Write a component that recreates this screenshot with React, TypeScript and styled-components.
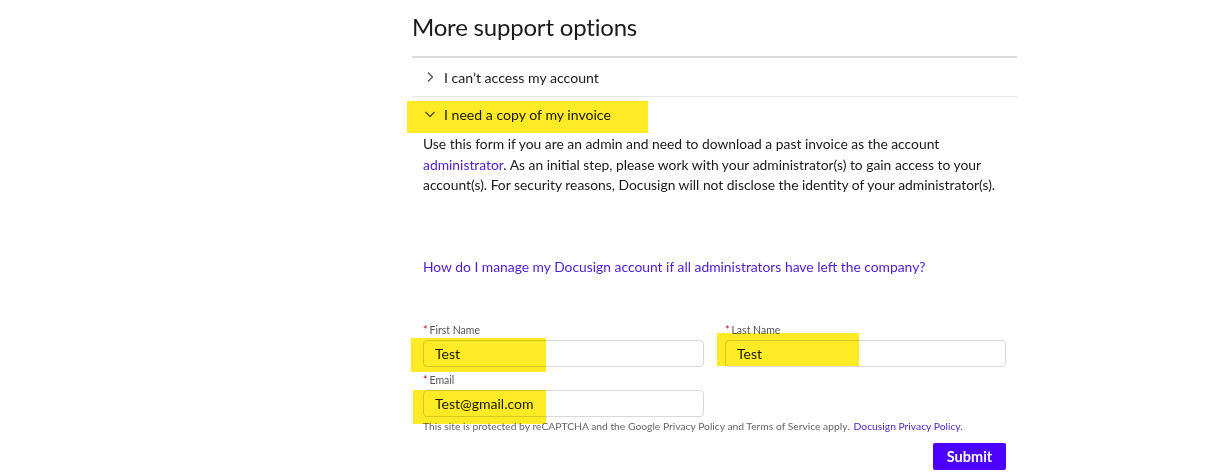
import React from "react";
import styled, { createGlobalStyle } from "styled-components";

const Global = createGlobalStyle`
  html, body { margin: 0; padding: 0; background: #fff; }
  body { font-family: Lato, "Noto Sans", Arial, sans-serif; color: #1e1e1e; }
`;

const Page = styled.div`
  position: relative;
  width: 1222px;
  height: 473px;
  overflow: hidden;
`;

const Column = styled.div`
  margin-left: 412px;
  width: 605px;
  padding-top: 11px;
`;

const Title = styled.h2`
  margin: 0;
  font-weight: 400;
  font-size: 24px;
  line-height: 32px;
  letter-spacing: -0.2px;
  color: #1a1a1a;
  padding-bottom: 13px;
  border-bottom: 2px solid #dcdcdc;
`;

const Row = styled.div<{ $open?: boolean }>`
  display: flex;
  align-items: center;
  gap: 8px;
  box-sizing: border-box;
  height: ${(p) => (p.$open ? "37px" : "39px")};
  padding-left: 12px;
  padding-bottom: ${(p) => (p.$open ? "3px" : "0")};
  font-size: 14.1px;
  color: #1a1a1a;
  border-bottom: ${(p) => (p.$open ? "none" : "1px solid #e6e6e6")};
`;

const Chevron = styled.svg`
  width: 12px;
  height: 12px;
  flex: none;
  stroke: #555;
  stroke-width: 1.3;
  fill: none;
`;

const Content = styled.div`
  padding-left: 11px;
`;

const Para = styled.p`
  margin: 0;
  font-size: 13.85px;
  line-height: 20.5px;
  color: #1a1a1a;
  width: 594px;
`;

const Link = styled.a`
  color: #5020d8;
  text-decoration: none;
`;

const Question = styled.p`
  margin: 61px 0 0;
  font-size: 13.85px;
  line-height: 20px;
  color: #5020d8;
`;

const Form = styled.form`
  margin-top: 47px;
  display: grid;
  grid-template-columns: 281px 281px;
  column-gap: 21px;
  width: 583px;
`;

const Field = styled.div`
  display: flex;
  flex-direction: column;
`;

const Label = styled.label`
  font-size: 10.5px;
  line-height: 13px;
  color: #555;
  margin-bottom: 3px;
  span { color: #d0021b; margin-right: 2px; }
`;

const Input = styled.div`
  height: 25px;
  border: 1px solid #d8d8d8;
  border-radius: 4px;
  padding-left: 11px;
  display: flex;
  align-items: center;
  font-size: 14px;
  color: #1a1a1a;
  margin-bottom: 7px;
`;

const Recaptcha = styled.p`
  grid-column: 1 / span 2;
  margin: -4px 0 0;
  font-size: 10.3px;
  line-height: 13px;
  color: #666;
`;

const SmallLink = styled.a`
  color: #4a1fc8;
  text-decoration: none;
  margin-left: 4px;
`;

const Actions = styled.div`
  grid-column: 1 / span 2;
  display: flex;
  justify-content: flex-end;
  margin-top: 10px;
`;

const Submit = styled.button`
  width: 73px;
  height: 27px;
  border: none;
  border-radius: 2px;
  background: #4c00ff;
  color: #fff;
  font-family: inherit;
  font-weight: 700;
  font-size: 14.5px;
  padding: 0;
`;

const Mark = styled.div`
  position: absolute;
  background: rgba(255, 230, 0, 0.85);
  mix-blend-mode: multiply;
  pointer-events: none;
`;

export default function App() {
  return (
    <>
      <Global />
      <Page>
        <Column>
          <Title>More support options</Title>
          <Row>
            <Chevron viewBox="0 0 12 12">
              <path d="M4 1.5 L8.5 6 L4 10.5" />
            </Chevron>
            I can’t access my account
          </Row>
          <Row $open>
            <Chevron viewBox="0 0 12 12">
              <path d="M1.5 4 L6 8.5 L10.5 4" />
            </Chevron>
            I need a copy of my invoice
          </Row>
          <Content>
            <Para>
              Use this form if you are an admin and need to download a past invoice as the account{" "}
              <Link>administrator</Link>. As an initial step, please work with your administrator(s) to gain access to your
              account(s). For security reasons, Docusign will not disclose the identity of your administrator(s).
            </Para>
            <Question>How do I manage my Docusign account if all administrators have left the company?</Question>
            <Form>
              <Field>
                <Label><span>*</span>First Name</Label>
                <Input>Test</Input>
              </Field>
              <Field>
                <Label><span>*</span>Last Name</Label>
                <Input>Test</Input>
              </Field>
              <Field>
                <Label><span>*</span>Email</Label>
                <Input>Test@gmail.com</Input>
              </Field>
              <div />
              <Recaptcha>
                This site is protected by reCAPTCHA and the Google Privacy Policy and Terms of Service apply.
                <SmallLink>Docusign Privacy Policy.</SmallLink>
              </Recaptcha>
              <Actions>
                <Submit type="button">Submit</Submit>
              </Actions>
            </Form>
          </Content>
        </Column>
        <Mark style={{ left: 407, top: 101, width: 241, height: 32 }} />
        <Mark style={{ left: 411, top: 338, width: 135, height: 34 }} />
        <Mark style={{ left: 717, top: 333, width: 142, height: 33 }} />
        <Mark style={{ left: 413, top: 390, width: 133, height: 34 }} />
      </Page>
    </>
  );
}
